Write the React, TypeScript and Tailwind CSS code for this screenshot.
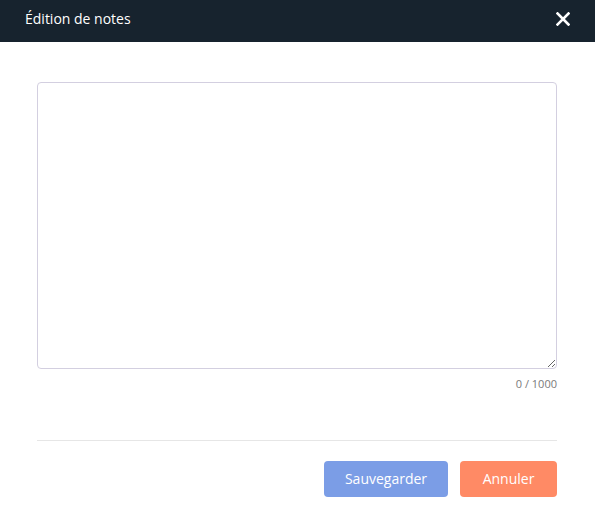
import { useState } from 'react';

export default function App() {
  const [notes, setNotes] = useState('');

  return (
    <div className="w-[595px] h-[515px] bg-white font-['Open_Sans',sans-serif]">
      {/* en-tête */}
      <div className="h-[42px] bg-[#17232e] flex items-center justify-between pl-[25px] pr-[25px] pb-[5px]">
        <span className="text-[14px] text-white">Édition de notes</span>
        <svg width="14" height="14" viewBox="0 0 14 14">
          <path d="M1.5 1.5 L12.5 12.5 M12.5 1.5 L1.5 12.5" stroke="#fff" strokeWidth="2.6" strokeLinecap="square" />
        </svg>
      </div>

      <div className="px-[37px] pt-[40px]">
        <textarea
          value={notes}
          onChange={(e) => setNotes(e.target.value)}
          maxLength={1000}
          className="block w-[520px] h-[287px] border border-[#d3cfe0] rounded-[4px] p-3 text-[14px] outline-none"
        />
        <div className="w-[520px] mt-[7px] text-right text-[11px] text-[#7a7a7a]">{notes.length} / 1000</div>

        <div className="w-[520px] mt-[47px] border-t border-[#e6e6e6]" />

        <div className="w-[520px] mt-[20px] flex justify-end gap-[12px]">
          <button className="w-[124px] h-[36px] rounded-[4px] bg-[#7b9de6] text-white text-[14px]">
            Sauvegarder
          </button>
          <button className="w-[97px] h-[36px] rounded-[4px] bg-[#ff8a65] text-white text-[14px]">
            Annuler
          </button>
        </div>
      </div>
    </div>
  );
}
